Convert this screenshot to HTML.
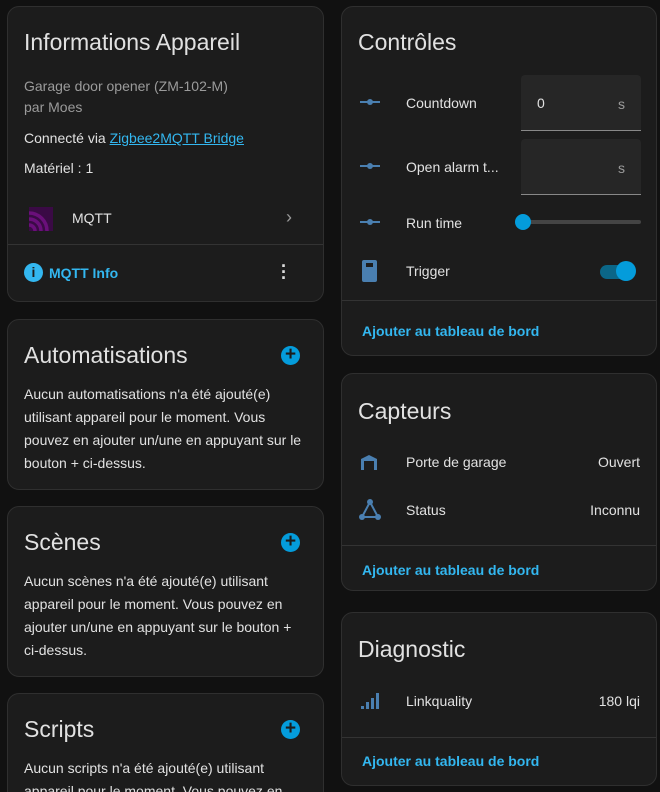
<html style="height:792px;overflow:hidden"><head><style>
body{margin:0;width:660px;height:792px;background:#111;font-family:"Liberation Sans",sans-serif;color:#e1e1e1;position:relative;overflow:hidden}
.c{position:absolute;background:#1c1c1c;border:1px solid #2f2f2f;border-radius:12px;box-sizing:border-box;overflow:hidden}
.a{position:absolute;white-space:nowrap}
.t{font-size:23px;color:#e1e1e1}
.s{font-size:14px}
.g{color:#9b9b9b;font-size:14px}
.l{color:#33b7f0;font-size:14px;font-weight:bold}
.hr{position:absolute;left:0;right:0;height:1px;background:#333}
.p{font-size:14px;line-height:23px;color:#e1e1e1;position:absolute;left:16px;right:16px}
.plus{position:absolute;width:19px;height:19px;border-radius:50%;background:#049cdb;color:#1c1c1c;font-weight:bold;font-size:19px;line-height:18px;text-align:center}
</style></head><body>
<div class="c" style="left:7px;top:6px;width:317px;height:296px">
<div class="a t" style="left:16px;top:22px">Informations Appareil</div>
<div class="a g" style="left:16px;top:71px">Garage door opener (ZM-102-M)</div>
<div class="a g" style="left:16px;top:92px">par Moes</div>
<div class="a s" style="left:16px;top:123px">Connecté via <span style="color:#33b7f0;text-decoration:underline">Zigbee2MQTT Bridge</span></div>
<div class="a s" style="left:16px;top:153px">Matériel : 1</div>
<svg class="a" style="left:21px;top:200px" width="24" height="24"><rect width="24" height="24" fill="#3a0a45"/><path d="M0 6A18 18 0 0 1 18 24M0 12A12 12 0 0 1 12 24M0 18A6 6 0 0 1 6 24" stroke="#6a0f7a" stroke-width="3.5" fill="none"/></svg>
<div class="a s" style="left:64px;top:203px">MQTT</div>
<div class="a" style="left:278px;top:200px;color:#999;font-size:18px">›</div>
<div class="hr" style="top:237px"></div>
<div class="a" style="left:16px;top:256px;width:19px;height:19px;border-radius:50%;background:#33b7f0;color:#1c1c1c;font-weight:bold;font-size:14px;text-align:center;line-height:19px">i</div>
<div class="a l" style="left:41px;top:258px">MQTT Info</div>
<div class="a" style="left:273px;top:256px;line-height:6px;color:#ddd;font-size:18px;font-weight:bold">·<br>·<br>·</div>
</div>
<div class="c" style="left:7px;top:319px;width:317px;height:171px">
<div class="a t" style="left:16px;top:22px">Automatisations</div><div class="plus" style="left:273px;top:26px">+</div>
<div class="p" style="top:63px">Aucun automatisations n'a été ajouté(e) utilisant appareil pour le moment. Vous pouvez en ajouter un/une en appuyant sur le bouton + ci-dessus.</div>
</div>
<div class="c" style="left:7px;top:506px;width:317px;height:171px">
<div class="a t" style="left:16px;top:22px">Scènes</div><div class="plus" style="left:273px;top:26px">+</div>
<div class="p" style="top:63px">Aucun scènes n'a été ajouté(e) utilisant appareil pour le moment. Vous pouvez en ajouter un/une en appuyant sur le bouton + ci-dessus.</div>
</div>
<div class="c" style="left:7px;top:693px;width:317px;height:99px;border-bottom:none;border-radius:12px 12px 0 0">
<div class="a t" style="left:16px;top:22px">Scripts</div><div class="plus" style="left:273px;top:26px">+</div>
<div class="p" style="top:63px">Aucun scripts n'a été ajouté(e) utilisant appareil pour le moment. Vous pouvez en ajouter un/une en appuyant sur le bouton + ci-dessus.</div>
</div>

<div class="c" style="left:341px;top:6px;width:316px;height:350px">
<div class="a t" style="left:16px;top:22px">Contrôles</div>
<svg class="a" style="left:18px;top:90px" width="20" height="10"><path d="M0 5H20" stroke="#4a7fb0" stroke-width="2"/><circle cx="10" cy="5" r="3" fill="#4a7fb0"/></svg>
<div class="a s" style="left:64px;top:88px">Countdown</div>
<div class="a" style="left:179px;top:68px;width:120px;height:55px;background:#262626;border-bottom:1px solid #888;border-radius:4px 4px 0 0"></div>
<div class="a s" style="left:195px;top:88px">0</div><div class="a g" style="left:276px;top:89px">s</div>
<svg class="a" style="left:18px;top:154px" width="20" height="10"><path d="M0 5H20" stroke="#4a7fb0" stroke-width="2"/><circle cx="10" cy="5" r="3" fill="#4a7fb0"/></svg>
<div class="a s" style="left:64px;top:152px">Open alarm t...</div>
<div class="a" style="left:179px;top:132px;width:120px;height:55px;background:#262626;border-bottom:1px solid #888;border-radius:4px 4px 0 0"></div>
<div class="a g" style="left:276px;top:153px">s</div>
<svg class="a" style="left:18px;top:210px" width="20" height="10"><path d="M0 5H20" stroke="#4a7fb0" stroke-width="2"/><circle cx="10" cy="5" r="3" fill="#4a7fb0"/></svg>
<div class="a s" style="left:64px;top:208px">Run time</div>
<div class="a" style="left:180px;top:213px;width:119px;height:4px;background:#444;border-radius:2px"></div>
<div class="a" style="left:173px;top:207px;width:16px;height:16px;border-radius:50%;background:#049cdb"></div>
<svg class="a" style="left:20px;top:253px" width="15" height="22"><rect width="15" height="22" rx="2" fill="#4a7fb0"/><rect x="4" y="3" width="7" height="4" fill="#1c1c1c"/></svg>
<div class="a s" style="left:64px;top:256px">Trigger</div>
<div class="a" style="left:258px;top:258px;width:34px;height:14px;border-radius:7px;background:#0b6687"></div>
<div class="a" style="left:274px;top:254px;width:20px;height:20px;border-radius:50%;background:#049cdb"></div>
<div class="hr" style="top:293px"></div>
<div class="a l" style="left:20px;top:316px">Ajouter au tableau de bord</div>
</div>
<div class="c" style="left:341px;top:373px;width:316px;height:218px">
<div class="a t" style="left:16px;top:24px">Capteurs</div>
<svg class="a" style="left:18px;top:80px" width="18" height="16"><path d="M1 16V5L9 1L17 5V16H14V7H4V16Z" fill="#4a7fb0"/></svg>
<div class="a s" style="left:64px;top:80px">Porte de garage</div>
<div class="a s" style="right:16px;top:80px">Ouvert</div>
<svg class="a" style="left:16px;top:125px" width="24" height="22"><path d="M12 3L4 18H20Z" stroke="#4a7fb0" stroke-width="2" fill="none"/><circle cx="12" cy="3" r="3" fill="#4a7fb0"/><circle cx="4" cy="18" r="3" fill="#4a7fb0"/><circle cx="20" cy="18" r="3" fill="#4a7fb0"/></svg>
<div class="a s" style="left:64px;top:128px">Status</div>
<div class="a s" style="right:16px;top:128px">Inconnu</div>
<div class="hr" style="top:171px"></div>
<div class="a l" style="left:20px;top:188px">Ajouter au tableau de bord</div>
</div>
<div class="c" style="left:341px;top:612px;width:316px;height:174px">
<div class="a t" style="left:16px;top:23px">Diagnostic</div>
<svg class="a" style="left:18px;top:77px" width="20" height="20"><rect x="1" y="16" width="3" height="3" fill="#4a7fb0"/><rect x="6" y="12" width="3" height="7" fill="#4a7fb0"/><rect x="11" y="8" width="3" height="11" fill="#4a7fb0"/><rect x="16" y="3" width="3" height="16" fill="#4a7fb0"/></svg>
<div class="a s" style="left:64px;top:80px">Linkquality</div>
<div class="a s" style="right:16px;top:80px">180 lqi</div>
<div class="hr" style="top:124px"></div>
<div class="a l" style="left:20px;top:140px">Ajouter au tableau de bord</div>
</div>
</body></html>
